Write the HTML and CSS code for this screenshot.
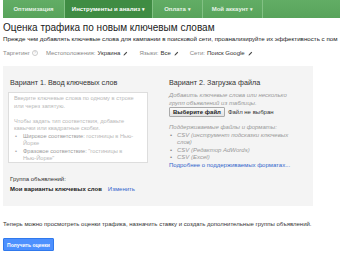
FILE: index.html
```html
<!DOCTYPE html>
<html lang="ru">
<head>
<meta charset="utf-8">
<link rel="stylesheet" href="styles.css">
</head>
<body>
<nav class="nav">
  <div class="tab tab-opt">Оптимизация</div>
  <div class="tab tab-tools active">Инструменты и анализ <span class="caret">▾</span></div>
  <div class="tab tab-pay">Оплата <span class="caret">▾</span></div>
  <div class="tab tab-acc">Мой аккаунт <span class="caret">▾</span></div>
</nav>

<h1 class="title">Оценка трафика по новым ключевым словам</h1>
<p class="subtitle">Прежде чем добавлять ключевые слова для кампании в поисковой сети, проанализируйте их эффективность с пом</p>

<div class="targeting">
  <span class="t-label">Таргетинг <span class="help">?</span></span>
  <span class="t-item">Местоположения: <b>Украина</b> <svg class="pen" viewBox="0 0 10 10"><path d="M1 9 L1.6 6.8 L6.8 1.6 L8.4 3.2 L3.2 8.4 Z" fill="#444"/></svg></span>
  <span class="t-item">Языки: <b>Все</b> <svg class="pen" viewBox="0 0 10 10"><path d="M1 9 L1.6 6.8 L6.8 1.6 L8.4 3.2 L3.2 8.4 Z" fill="#444"/></svg></span>
  <span class="t-item">Сети: <b>Поиск Google</b> <svg class="pen" viewBox="0 0 10 10"><path d="M1 9 L1.6 6.8 L6.8 1.6 L8.4 3.2 L3.2 8.4 Z" fill="#444"/></svg></span>
</div>

<section class="panel">
  <div class="col col-left">
    <h3 class="col-title">Вариант 1. Ввод ключевых слов</h3>
    <div class="kw-box">
      <div class="kw-line">Введите ключевые слова по одному в строке</div>
      <div class="kw-line">или через запятую.</div>
      <div class="kw-line">&nbsp;</div>
      <div class="kw-line">Чтобы задать тип соответствия, добавьте</div>
      <div class="kw-line">кавычки или квадратные скобки.</div>
      <ul class="kw-list">
        <li><span class="kw-em">Широкое соответствие:</span> гостиницы в Нью-<br>Йорке</li>
        <li><span class="kw-em">Фразовое соответствие:</span> "гостиницы в<br>Нью-Йорке"</li>
      </ul>
    </div>
    <div class="group">
      <div class="group-label">Группа объявлений:</div>
      <div class="group-value"><b>Мои варианты ключевых слов</b><a class="link change">Изменить</a></div>
    </div>
  </div>
  <div class="col col-right">
    <h3 class="col-title">Вариант 2. Загрузка файла</h3>
    <p class="hint">Добавить ключевые слова или несколько<br>групп объявлений из таблицы.</p>
    <div class="file-row"><span class="file-btn">Выберите файл</span><span class="file-none">Файл не выбран</span></div>
    <p class="hint formats">Поддерживаемые файлы и форматы:</p>
    <ul class="fmt-list">
      <li>CSV (инструмент подсказки ключевых<br>слов)</li>
      <li>CSV (Редактор AdWords)</li>
      <li>CSV (Excel)</li>
    </ul>
    <a class="link more">Подробнее о поддерживаемых форматах...</a>
  </div>
</section>

<p class="note">Теперь можно просмотреть оценки трафика, назначить ставку и создать дополнительные группы объявлений.</p>
<button class="btn-primary">Получить оценки</button>
</body>
</html>
```

FILE: styles.css
```css
* { box-sizing: border-box; }
html, body { margin: 0; padding: 0; background: #fff; }
body {
  padding-left: 3px;
  width: 340px;
  height: 256px;
  overflow: hidden;
  font-family: "Liberation Sans", Arial, sans-serif;
  color: #333;
}

.nav {
  display: flex;
  height: 18px;
  background: linear-gradient(#62ad65, #58a35b);
}
.tab {
  display: flex;
  align-items: center;
  justify-content: center;
  font-size: 6px;
  font-weight: bold;
  color: #e6f3e6;
  border-right: 1px solid #82c184;
  white-space: nowrap;
}
.tab .caret { margin-left: 2px; font-size: 5px; }
.tab.active { background: #3f8c43; color: #fff; }
.tab-opt { width: 62px; }
.tab-tools { width: 88px; }
.tab-pay { width: 50px; }
.tab-acc { width: 60px; }

.title {
  margin: 4px 0 0;
  font-size: 10px;
  line-height: 11px;
  font-weight: normal;
  color: #222;
}
.subtitle {
  margin: 2px 0 0;
  font-size: 6.2px;
  line-height: 7px;
  white-space: nowrap;
  color: #222;
}

.targeting {
  margin-top: 7px;
  display: flex;
  align-items: center;
  font-size: 6px;
  line-height: 8px;
  color: #888;
}
.targeting b { font-weight: normal; color: #333; }
.t-label { margin-right: 8px; display: flex; align-items: center; }
.t-item { margin-right: 11px; display: flex; align-items: center; white-space: nowrap; }
.t-item b { margin-left: 2px; }
.help {
  display: inline-flex;
  align-items: center;
  justify-content: center;
  width: 6px;
  height: 6px;
  margin-left: 2px;
  border: 1px solid #ccc;
  border-radius: 50%;
  font-size: 4px;
  color: #bbb;
}
.pen { width: 5px; height: 5px; margin-left: 3px; }

.panel {
  margin-top: 9px;
  width: 310px;
  height: 140px;
  background: #f4f4f4;
  display: grid;
  grid-template-columns: 140px 1fr;
  column-gap: 21px;
  padding: 13px 6px 0 5px;
}
.col-title {
  margin: 0 0 5px;
  font-size: 7.2px;
  line-height: 8px;
  font-weight: normal;
  color: #333;
}
.col-left .col-title { margin-left: 2px; }

.kw-box {
  height: 71px;
  background: #fff;
  border: 1px solid #ddd;
  padding: 2px 4px 0 5px;
  font-size: 5.7px;
  line-height: 7.5px;
  color: #b8b8b8;
  white-space: nowrap;
}
.kw-list { margin: 0; padding: 0 0 0 9px; }
.kw-list li { list-style: none; position: relative; }
.kw-list li::before { content: "•"; position: absolute; left: -8px; color: #aaa; }
.kw-em { color: #9a9a9a; }

.group { margin-top: 11px; margin-left: 2px; font-size: 6px; line-height: 10px; color: #333; }
.group-value b { color: #222; }
.change { margin-left: 6px; }
.link { color: #3366cc; }

.hint {
  margin: 0;
  font-size: 6px;
  line-height: 7.5px;
  font-style: italic;
  color: #999;
}
.file-row { display: flex; align-items: center; margin-top: 0; font-size: 6px; }
.file-btn {
  display: inline-block;
  height: 10px;
  line-height: 8px;
  padding: 0 3px;
  border: 1px solid #aaa;
  border-radius: 1px;
  background: linear-gradient(#fafafa, #e2e2e2);
  color: #222;
  font-weight: bold;
}
.file-none { margin-left: 3px; color: #333; }
.formats { margin-top: 7px; }
.fmt-list {
  margin: 0;
  padding: 0 0 0 8px;
  font-size: 6px;
  line-height: 7.5px;
  font-style: italic;
  color: #999;
}
.fmt-list li { list-style: none; position: relative; }
.fmt-list li::before { content: "•"; position: absolute; left: -7px; font-style: normal; color: #888; }
.more { display: block; font-size: 6px; line-height: 7.5px; }

.note {
  margin: 14px 0 0;
  font-size: 6px;
  line-height: 8px;
  color: #333;
  white-space: nowrap;
}
.btn-primary {
  display: block;
  margin-top: 10px;
  width: 51px;
  height: 13px;
  padding: 0;
  border: 1px solid #3079ed;
  border-radius: 1px;
  background: #4d90fe;
  color: #fff;
  font-family: "Liberation Sans", Arial, sans-serif;
  font-size: 5px;
  font-weight: bold;
}
```
